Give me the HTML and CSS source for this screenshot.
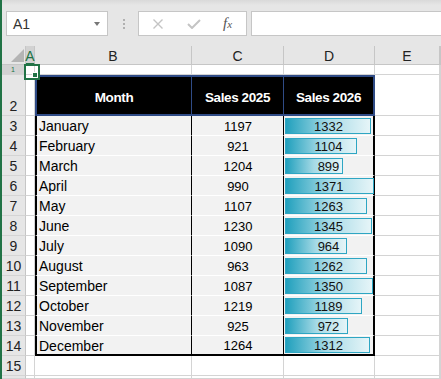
FILE: index.html
```html
<!DOCTYPE html>
<html lang="en">
  <head>
    <meta charset="UTF-8" />
    <title>Sales sheet</title>
    <link rel="stylesheet" href="styles.css">
  </head>
  <body>
    <div class="toolbar">
      <div class="namebox">
        <span>A1</span>
        <span class="caret"></span>
      </div>
      <div class="grip"><i></i><i></i><i></i></div>
      <div class="fbtns">
        <svg width="12" height="10" viewBox="0 0 12 10"><path d="M1.5 0.5 L10.5 9.5 M10.5 0.5 L1.5 9.5" stroke="#c4c4c4" stroke-width="1.4" fill="none"/></svg>
        <svg width="14" height="10" viewBox="0 0 14 10"><path d="M1 5 L5 9 L13 1" stroke="#c4c4c4" stroke-width="2" fill="none"/></svg>
        <span class="fx">f<small>x</small></span>
      </div>
      <div class="finput"></div>
    </div>

    <div class="sheet">
      <!-- column headers -->
      <div class="corner"><svg width="24" height="18" viewBox="0 0 24 18"><path d="M9 16 L22 16 L22 3 Z" fill="#b4b4b4"/></svg></div>
      <div class="ch sel">A</div>
      <div class="ch">B</div>
      <div class="ch">C</div>
      <div class="ch">D</div>
      <div class="ch">E</div>
      <div class="ch"></div>

      <!-- row 1 -->
      <div class="rh sel short"><span>1</span></div>
      <div class="c active"><span class="handle"></span></div>
      <div class="c"></div>
      <div class="c"></div>
      <div class="c"></div>
      <div class="c"></div>
      <div class="c"></div>

      <!-- table B2:D14 -->
      <div class="tbl">
        <div class="th first">Month</div>
        <div class="th">Sales 2025</div>
        <div class="th last">Sales 2026</div>

        <div class="td name">January</div><div class="td num">1197</div>
        <div class="td bar-cell"><div class="bar" style="width: 86px"></div><span>1332</span></div>
        <div class="td name">February</div><div class="td num">921</div>
        <div class="td bar-cell"><div class="bar" style="width: 72px"></div><span>1104</span></div>
        <div class="td name">March</div><div class="td num">1204</div>
        <div class="td bar-cell"><div class="bar" style="width: 58px"></div><span>899</span></div>
        <div class="td name">April</div><div class="td num">990</div>
        <div class="td bar-cell"><div class="bar" style="width: 89px"></div><span>1371</span></div>
        <div class="td name">May</div><div class="td num">1107</div>
        <div class="td bar-cell"><div class="bar" style="width: 82px"></div><span>1263</span></div>
        <div class="td name">June</div><div class="td num">1230</div>
        <div class="td bar-cell"><div class="bar" style="width: 87px"></div><span>1345</span></div>
        <div class="td name">July</div><div class="td num">1090</div>
        <div class="td bar-cell"><div class="bar" style="width: 62px"></div><span>964</span></div>
        <div class="td name">August</div><div class="td num">963</div>
        <div class="td bar-cell"><div class="bar" style="width: 82px"></div><span>1262</span></div>
        <div class="td name">September</div><div class="td num">1087</div>
        <div class="td bar-cell"><div class="bar" style="width: 88px"></div><span>1350</span></div>
        <div class="td name">October</div><div class="td num">1219</div>
        <div class="td bar-cell"><div class="bar" style="width: 77px"></div><span>1189</span></div>
        <div class="td name">November</div><div class="td num">925</div>
        <div class="td bar-cell"><div class="bar" style="width: 63px"></div><span>972</span></div>
        <div class="td name end">December</div><div class="td num end">1264</div>
        <div class="td bar-cell end"><div class="bar" style="width: 85px"></div><span>1312</span></div>
      </div>

      <!-- rows 2..14: header, A, E, F -->
      <div class="rh tall">2</div><div class="c"></div><div class="c"></div><div class="c"></div>
      <div class="rh">3</div><div class="c"></div><div class="c"></div><div class="c"></div>
      <div class="rh">4</div><div class="c"></div><div class="c"></div><div class="c"></div>
      <div class="rh">5</div><div class="c"></div><div class="c"></div><div class="c"></div>
      <div class="rh">6</div><div class="c"></div><div class="c"></div><div class="c"></div>
      <div class="rh">7</div><div class="c"></div><div class="c"></div><div class="c"></div>
      <div class="rh">8</div><div class="c"></div><div class="c"></div><div class="c"></div>
      <div class="rh">9</div><div class="c"></div><div class="c"></div><div class="c"></div>
      <div class="rh">10</div><div class="c"></div><div class="c"></div><div class="c"></div>
      <div class="rh">11</div><div class="c"></div><div class="c"></div><div class="c"></div>
      <div class="rh">12</div><div class="c"></div><div class="c"></div><div class="c"></div>
      <div class="rh">13</div><div class="c"></div><div class="c"></div><div class="c"></div>
      <div class="rh">14</div><div class="c"></div><div class="c"></div><div class="c"></div>

      <!-- row 15 -->
      <div class="rh">15</div>
      <div class="c"></div><div class="c"></div><div class="c"></div>
      <div class="c"></div><div class="c"></div><div class="c"></div>

      <!-- row 16 -->
      <div class="rh"></div>
      <div class="c"></div><div class="c"></div><div class="c"></div>
      <div class="c"></div><div class="c"></div><div class="c"></div>
    </div>
  </body>
</html>
```

FILE: styles.css
```css
* {
  box-sizing: border-box;
  margin: 0;
  padding: 0;
}

body {
  width: 441px;
  height: 379px;
  overflow: hidden;
  background: #ffffff;
  border-left: 2px solid #217346;
  font-family: "Liberation Sans", Arial, sans-serif;
  font-size: 14px;
  color: #000;
}

/* formula bar */

.toolbar {
  height: 46px;
  display: flex;
  align-items: flex-start;
  padding: 11px 0 0 4px;
  background: linear-gradient(to bottom, #d9d9d9 0, #e6e6e6 5px, #e6e6e6 100%);
}

.namebox {
  width: 102px;
  height: 25px;
  background: white;
  border: 1px solid #c6c6c6;
  display: flex;
  align-items: center;
  justify-content: space-between;
  padding: 0 7px 0 6px;
  color: #333;
  font-size: 14px;
}

.caret {
  width: 0;
  height: 0;
  border-left: 3.5px solid transparent;
  border-right: 3.5px solid transparent;
  border-top: 4px solid #777;
}

.grip {
  display: flex;
  flex-direction: column;
  gap: 2px;
  margin: 8px 0 0 15px;
}

.grip i {
  width: 2px;
  height: 2px;
  background: #b0b0b0;
}

.fbtns {
  width: 109px;
  height: 25px;
  margin-left: 13px;
  background: white;
  border: 1px solid #c6c6c6;
  display: flex;
  align-items: center;
  gap: 23px;
  padding-left: 13px;
}

.fx {
  font-family: "Liberation Serif", serif;
  font-style: italic;
  font-size: 15px;
  color: #555;
  margin-left: -1px;
}

.fx small {
  font-size: 11px;
}

.finput {
  flex: 1;
  height: 25px;
  margin: 0 -2px 0 4px;
  background: white;
  border: 1px solid #c6c6c6;
}

/* sheet grid */

.sheet {
  height: 333px;
  display: grid;
  grid-template-columns: 24px 9px 157px 92px 91px 65px 1fr;
  grid-template-rows: 19px 10px 41px repeat(12, 20px) 20px 1fr;
}

.c {
  border-right: 1px solid #d4d4d4;
  border-bottom: 1px solid #d4d4d4;
}

.corner {
  background: #e6e6e6;
  border-right: 1px solid #c6c6c6;
  border-bottom: 1px solid #c6c6c6;
}

.corner svg {
  display: block;
}

.ch {
  background: #e6e6e6;
  border-right: 1px solid #c6c6c6;
  border-bottom: 1px solid #c6c6c6;
  display: flex;
  align-items: center;
  justify-content: center;
  color: #222;
  font-size: 14px;
  padding-top: 1px;
}

.ch.sel {
  background: #d2d2d2;
  color: #217346;
  border-bottom: 2px solid #217346;
  padding-top: 3px;
}

.rh {
  background: #e6e6e6;
  border-right: 1px solid #c6c6c6;
  border-bottom: 1px solid #d4d4d4;
  display: flex;
  align-items: center;
  justify-content: center;
  color: #222;
  font-size: 14px;
}

.rh.tall {
  align-items: flex-end;
  padding-bottom: 1px;
}

.rh.sel {
  background: #d2d2d2;
  border-right: 2px solid #217346;
  color: #217346;
}

.rh.short span {
  font-size: 7px;
  line-height: 8px;
}

.active {
  position: relative;
}

.active::before {
  content: "";
  position: absolute;
  left: -2px;
  top: -1px;
  width: 12px;
  height: 12px;
  border: 2px solid #217346;
}

.handle {
  position: absolute;
  right: -4px;
  bottom: -4px;
  width: 6px;
  height: 6px;
  background: #217346;
  border: 1px solid white;
}

/* table B2:D14 */

.tbl {
  grid-column: 3 / 6;
  grid-row: 3 / 16;
  display: grid;
  grid-template-columns: 157px 92px 91px;
  grid-template-rows: 41px repeat(12, 20px);
}

.th {
  background: black;
  color: white;
  font-weight: bold;
  font-size: 13.5px;
  letter-spacing: -0.4px;
  display: flex;
  align-items: center;
  justify-content: center;
  padding-top: 4px;
  border-top: 2px solid #2f4b86;
  border-bottom: 2px solid #2f4b86;
  border-right: 1px solid #2f4b86;
}

.th.first {
  border-left: 2px solid #2f4b86;
}

.th.last {
  border-right: 2px solid #2f4b86;
}

.td {
  background: #f2f2f2;
  border-bottom: 1px solid #ffffff;
  border-right: 1px solid #000;
  display: flex;
  align-items: center;
  padding-top: 1px;
}

.td.name {
  border-left: 2px solid #000;
  padding-left: 2px;
}

.td.num {
  justify-content: center;
  font-size: 13px;
  padding-left: 1px;
}

.td.end {
  border-bottom: 2px solid #000;
}

.bar-cell {
  display: grid;
  align-items: center;
  border-right: 2px solid #000;
  font-size: 13px;
  padding-top: 0;
}

.bar-cell .bar,
.bar-cell span {
  grid-area: 1 / 1;
}

.bar {
  height: 16px;
  margin-left: 1px;
  border: 1px solid #2ea6c3;
  background: linear-gradient(to right, #21a0bd 0%, #a6dae6 50%, #e6f5f8 100%);
}

.bar-cell span {
  justify-self: center;
  position: relative;
  color: #111;
  padding-top: 1px;
}
```
